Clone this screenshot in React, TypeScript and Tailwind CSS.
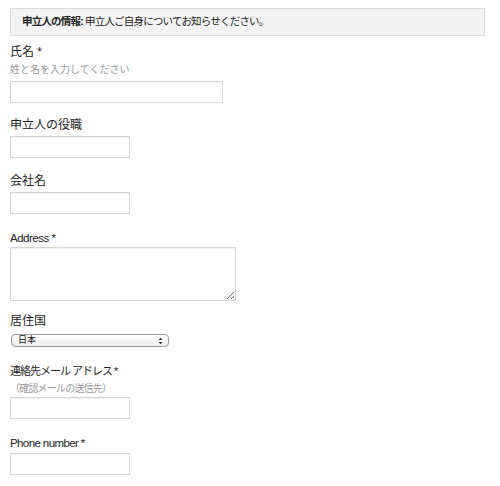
import React from "react";

const font = { fontFamily: '"Liberation Sans", "Noto Sans CJK JP", sans-serif' };

function Label({ children, req, cls }: { children: React.ReactNode; req?: boolean; cls?: string }) {
  return (
    <div className={`${cls ?? "text-[12px]"} leading-[16px] text-[#222]`}>
      {children}
      {req && <span>&nbsp;*</span>}
    </div>
  );
}

function Input({ w }: { w: string }) {
  return (
    <input
      type="text"
      className={`${w} h-[22px] border border-[#d6d6d6] bg-white shadow-[inset_0_1px_1px_rgba(0,0,0,0.06)] outline-none block`}
    />
  );
}

export default function App() {
  return (
    <div className="w-[500px] h-[486px] bg-white pl-[10px] pr-[15px] pt-[8px]" style={font}>
      <div className="h-[28px] border border-[#dcdcdc] bg-[#f3f3f3] pl-[11px] flex items-center text-[10.5px] tracking-[-0.8px] text-[#222]">
        <b className="font-bold">申立人の情報:</b>
        <span>&nbsp;申立人ご自身についてお知らせください。</span>
      </div>

      <div className="mt-[8px]">
        <Label req>氏名</Label>
        <div className="text-[10px] leading-[16px] text-[#999] mt-[2px]">姓と名を入力してください</div>
        <div className="mt-[3px]">
          <Input w="w-[213px]" />
        </div>
      </div>

      <div className="mt-[14px]">
        <Label>申立人の役職</Label>
        <div className="mt-[3px]">
          <Input w="w-[120px]" />
        </div>
      </div>

      <div className="mt-[15px]">
        <Label>会社名</Label>
        <div className="mt-[3px]">
          <Input w="w-[120px]" />
        </div>
      </div>

      <div className="mt-[16px]">
        <Label req cls="text-[11.5px] tracking-[-0.5px]">Address</Label>
        <div className="mt-[1px]">
          <textarea className="block w-[226px] h-[54px] border border-[#d6d6d6] bg-white shadow-[inset_0_1px_1px_rgba(0,0,0,0.06)] outline-none" />
        </div>
      </div>

      <div className="mt-[12px]">
        <Label>居住国</Label>
        <div className="mt-[5px] ml-[1px] w-[158px] h-[13px] rounded-[4px] border border-[#9a9a9a] bg-gradient-to-b from-white to-[#ececec] flex items-center justify-between pl-[6px] pr-[5px] text-[9px] leading-[11px] text-[#111]">
          <span>日本</span>
          <svg width="5" height="8" viewBox="0 0 5 8">
            <path d="M0.5 3 L2.5 0.8 L4.5 3 Z" fill="#333" />
            <path d="M0.5 5 L2.5 7.2 L4.5 5 Z" fill="#333" />
          </svg>
        </div>
      </div>

      <div className="mt-[16px]">
        <Label req cls="text-[11px] tracking-[-1px]">連絡先メール アドレス</Label>
        <div className="text-[10px] tracking-[-0.8px] leading-[16px] text-[#999] mt-[2px]">（確認メールの送信先）</div>
        <div className="mt-[0px]">
          <Input w="w-[120px]" />
        </div>
      </div>

      <div className="mt-[16px]">
        <Label req cls="text-[11.5px] tracking-[-0.6px]">Phone number</Label>
        <div className="mt-[2px]">
          <Input w="w-[120px]" />
        </div>
      </div>
    </div>
  );
}
